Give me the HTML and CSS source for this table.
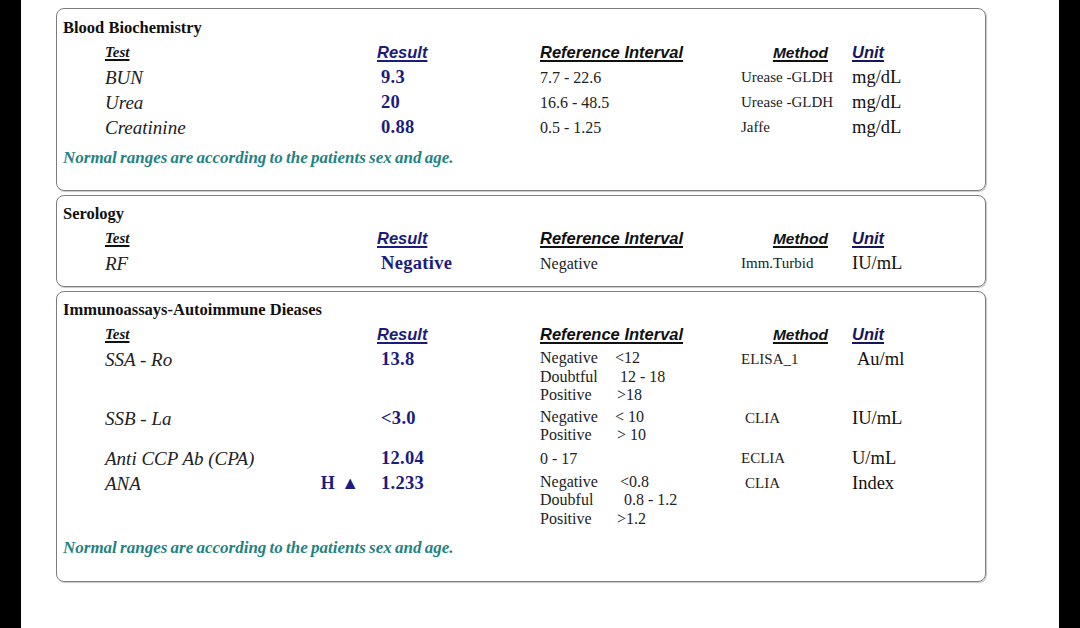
FILE: index.html
```html
<!DOCTYPE html>
<html lang="en">
<head>
<meta charset="utf-8">
<title>Lab Report</title>
<link rel="stylesheet" href="styles.css">
</head>
<body>
<div class="strip"></div>
<main class="page">
  <section class="box box-bio">
    <h2 class="title">Blood Biochemistry</h2>
    <div class="row head">
      <span class="h-test">Test</span>
      <span class="h-result">Result</span>
      <span class="h-ref">Reference Interval</span>
      <span class="h-method">Method</span>
      <span class="h-unit">Unit</span>
    </div>
    <div class="row">
      <span class="test">BUN</span>
      <span class="result">9.3</span>
      <span class="ref">7.7 - 22.6</span>
      <span class="method">Urease -GLDH</span>
      <span class="unit">mg/dL</span>
    </div>
    <div class="row">
      <span class="test">Urea</span>
      <span class="result">20</span>
      <span class="ref">16.6 - 48.5</span>
      <span class="method">Urease -GLDH</span>
      <span class="unit">mg/dL</span>
    </div>
    <div class="row">
      <span class="test">Creatinine</span>
      <span class="result">0.88</span>
      <span class="ref">0.5 - 1.25</span>
      <span class="method">Jaffe</span>
      <span class="unit">mg/dL</span>
    </div>
    <p class="note">Normal ranges are according to the patients sex and age.</p>
  </section>

  <section class="box box-sero">
    <h2 class="title">Serology</h2>
    <div class="row head">
      <span class="h-test">Test</span>
      <span class="h-result">Result</span>
      <span class="h-ref">Reference Interval</span>
      <span class="h-method">Method</span>
      <span class="h-unit">Unit</span>
    </div>
    <div class="row">
      <span class="test">RF</span>
      <span class="result">Negative</span>
      <span class="ref">Negative</span>
      <span class="method">Imm.Turbid</span>
      <span class="unit">IU/mL</span>
    </div>
  </section>

  <section class="box box-immu">
    <h2 class="title">Immunoassays-Autoimmune Dieases</h2>
    <div class="row head">
      <span class="h-test">Test</span>
      <span class="h-result">Result</span>
      <span class="h-ref">Reference Interval</span>
      <span class="h-method">Method</span>
      <span class="h-unit">Unit</span>
    </div>
    <div class="row">
      <span class="test">SSA - Ro</span>
      <span class="result">13.8</span>
      <span class="ref multi">
        <span class="lbl">Negative</span><span class="val">&lt;12</span>
        <span class="lbl">Doubtful</span><span class="val v2">12 - 18</span>
        <span class="lbl">Positive</span><span class="val v1">&gt;18</span>
      </span>
      <span class="method">ELISA_1</span>
      <span class="unit u1">Au/ml</span>
    </div>
    <div class="row">
      <span class="test">SSB - La</span>
      <span class="result">&lt;3.0</span>
      <span class="ref multi">
        <span class="lbl">Negative</span><span class="val">&lt; 10</span>
        <span class="lbl">Positive</span><span class="val v1">&gt; 10</span>
      </span>
      <span class="method m1">CLIA</span>
      <span class="unit">IU/mL</span>
    </div>
    <div class="row">
      <span class="test">Anti CCP Ab (CPA)</span>
      <span class="result">12.04</span>
      <span class="ref">0 - 17</span>
      <span class="method">ECLIA</span>
      <span class="unit">U/mL</span>
    </div>
    <div class="row">
      <span class="test flagged">ANA <span class="flag">H ▲</span></span>
      <span class="result">1.233</span>
      <span class="ref multi">
        <span class="lbl">Negative</span><span class="val v2">&lt;0.8</span>
        <span class="lbl">Doubful</span><span class="val v3">0.8 - 1.2</span>
        <span class="lbl">Positive</span><span class="val v1">&gt;1.2</span>
      </span>
      <span class="method m1">CLIA</span>
      <span class="unit">Index</span>
    </div>
    <p class="note note-immu">Normal ranges are according to the patients sex and age.</p>
  </section>
</main>
<div class="strip"></div>
</body>
</html>
```

FILE: styles.css
```css
html, body {
  margin: 0;
  padding: 0;
  background: #ffffff;
}

body {
  display: flex;
  width: 1080px;
  height: 628px;
  overflow: hidden;
  font-family: "Liberation Serif", "Times New Roman", serif;
  color: #1a1a1a;
}

.strip {
  width: 21px;
  flex: 0 0 21px;
  background: #000;
}

.page {
  flex: 1;
  padding: 8px 73px 0 35px;
  display: flex;
  flex-direction: column;
  gap: 4px;
}

.box {
  border: 1px solid #7d7d7d;
  border-radius: 8px;
  box-shadow: 1px 1px 1px rgba(0, 0, 0, 0.22);
  padding: 7px 0 0 6px;
}

.box-bio {
  height: 174px;
}

.box-sero {
  height: 84px;
  padding-top: 6px;
}

.box-immu {
  height: 283px;
  padding-top: 6px;
}

.title {
  margin: 0;
  font-size: 16.5px;
  font-weight: bold;
  line-height: 24px;
  color: #111;
}

.row {
  display: grid;
  grid-template-columns: 272px 163px 201px 111px auto;
  align-items: start;
  padding-left: 42px;
  line-height: 25px;
}

/* header row */
.head span {
  font-weight: bold;
  font-style: italic;
  text-decoration: underline;
  text-decoration-thickness: 1.5px;
  text-underline-offset: 2px;
}

.h-test {
  font-family: "Liberation Serif", serif;
  font-size: 15px;
  color: #111;
}

.h-result,
.h-ref,
.h-method,
.h-unit {
  font-family: "Liberation Sans", Arial, sans-serif;
  font-size: 16.5px;
}

.h-result {
  color: #1c1c7a;
}

.h-ref {
  color: #111;
}

.h-method {
  color: #111;
  font-size: 15.5px;
  text-align: right;
  padding-right: 24px;
}

.h-unit {
  color: #16165a;
}

/* body cells */
.test {
  font-style: italic;
  font-size: 19px;
  color: #222;
}

.flagged {
  display: flex;
  justify-content: space-between;
  padding-right: 18px;
}

.flag {
  font-style: normal;
  font-weight: bold;
  font-size: 18px;
  color: #1b1b80;
  word-spacing: 2px;
}

.result {
  font-weight: bold;
  font-size: 18.5px;
  color: #1b1b80;
  padding-left: 4px;
  letter-spacing: 0.3px;
}

.ref {
  font-size: 16px;
  color: #222;
}

.ref.multi {
  display: grid;
  grid-template-columns: 75px auto;
  line-height: 18.5px;
  padding: 2px 0 1px;
}

.val {
  white-space: pre;
}

.v1 { padding-left: 2px; }
.v2 { padding-left: 5px; }
.v3 { padding-left: 9px; }

.method {
  font-size: 15px;
  color: #222;
  white-space: nowrap;
}

.m1 {
  padding-left: 4px;
}

.unit {
  font-size: 18.5px;
  color: #111;
}

.u1 {
  padding-left: 5px;
}

.note {
  margin: 5px 0 0;
  font-size: 17px;
  line-height: 25px;
  font-weight: bold;
  font-style: italic;
  color: #1f8383;
  word-spacing: -1px;
}

.note-immu {
  margin-top: 6px;
}
```
